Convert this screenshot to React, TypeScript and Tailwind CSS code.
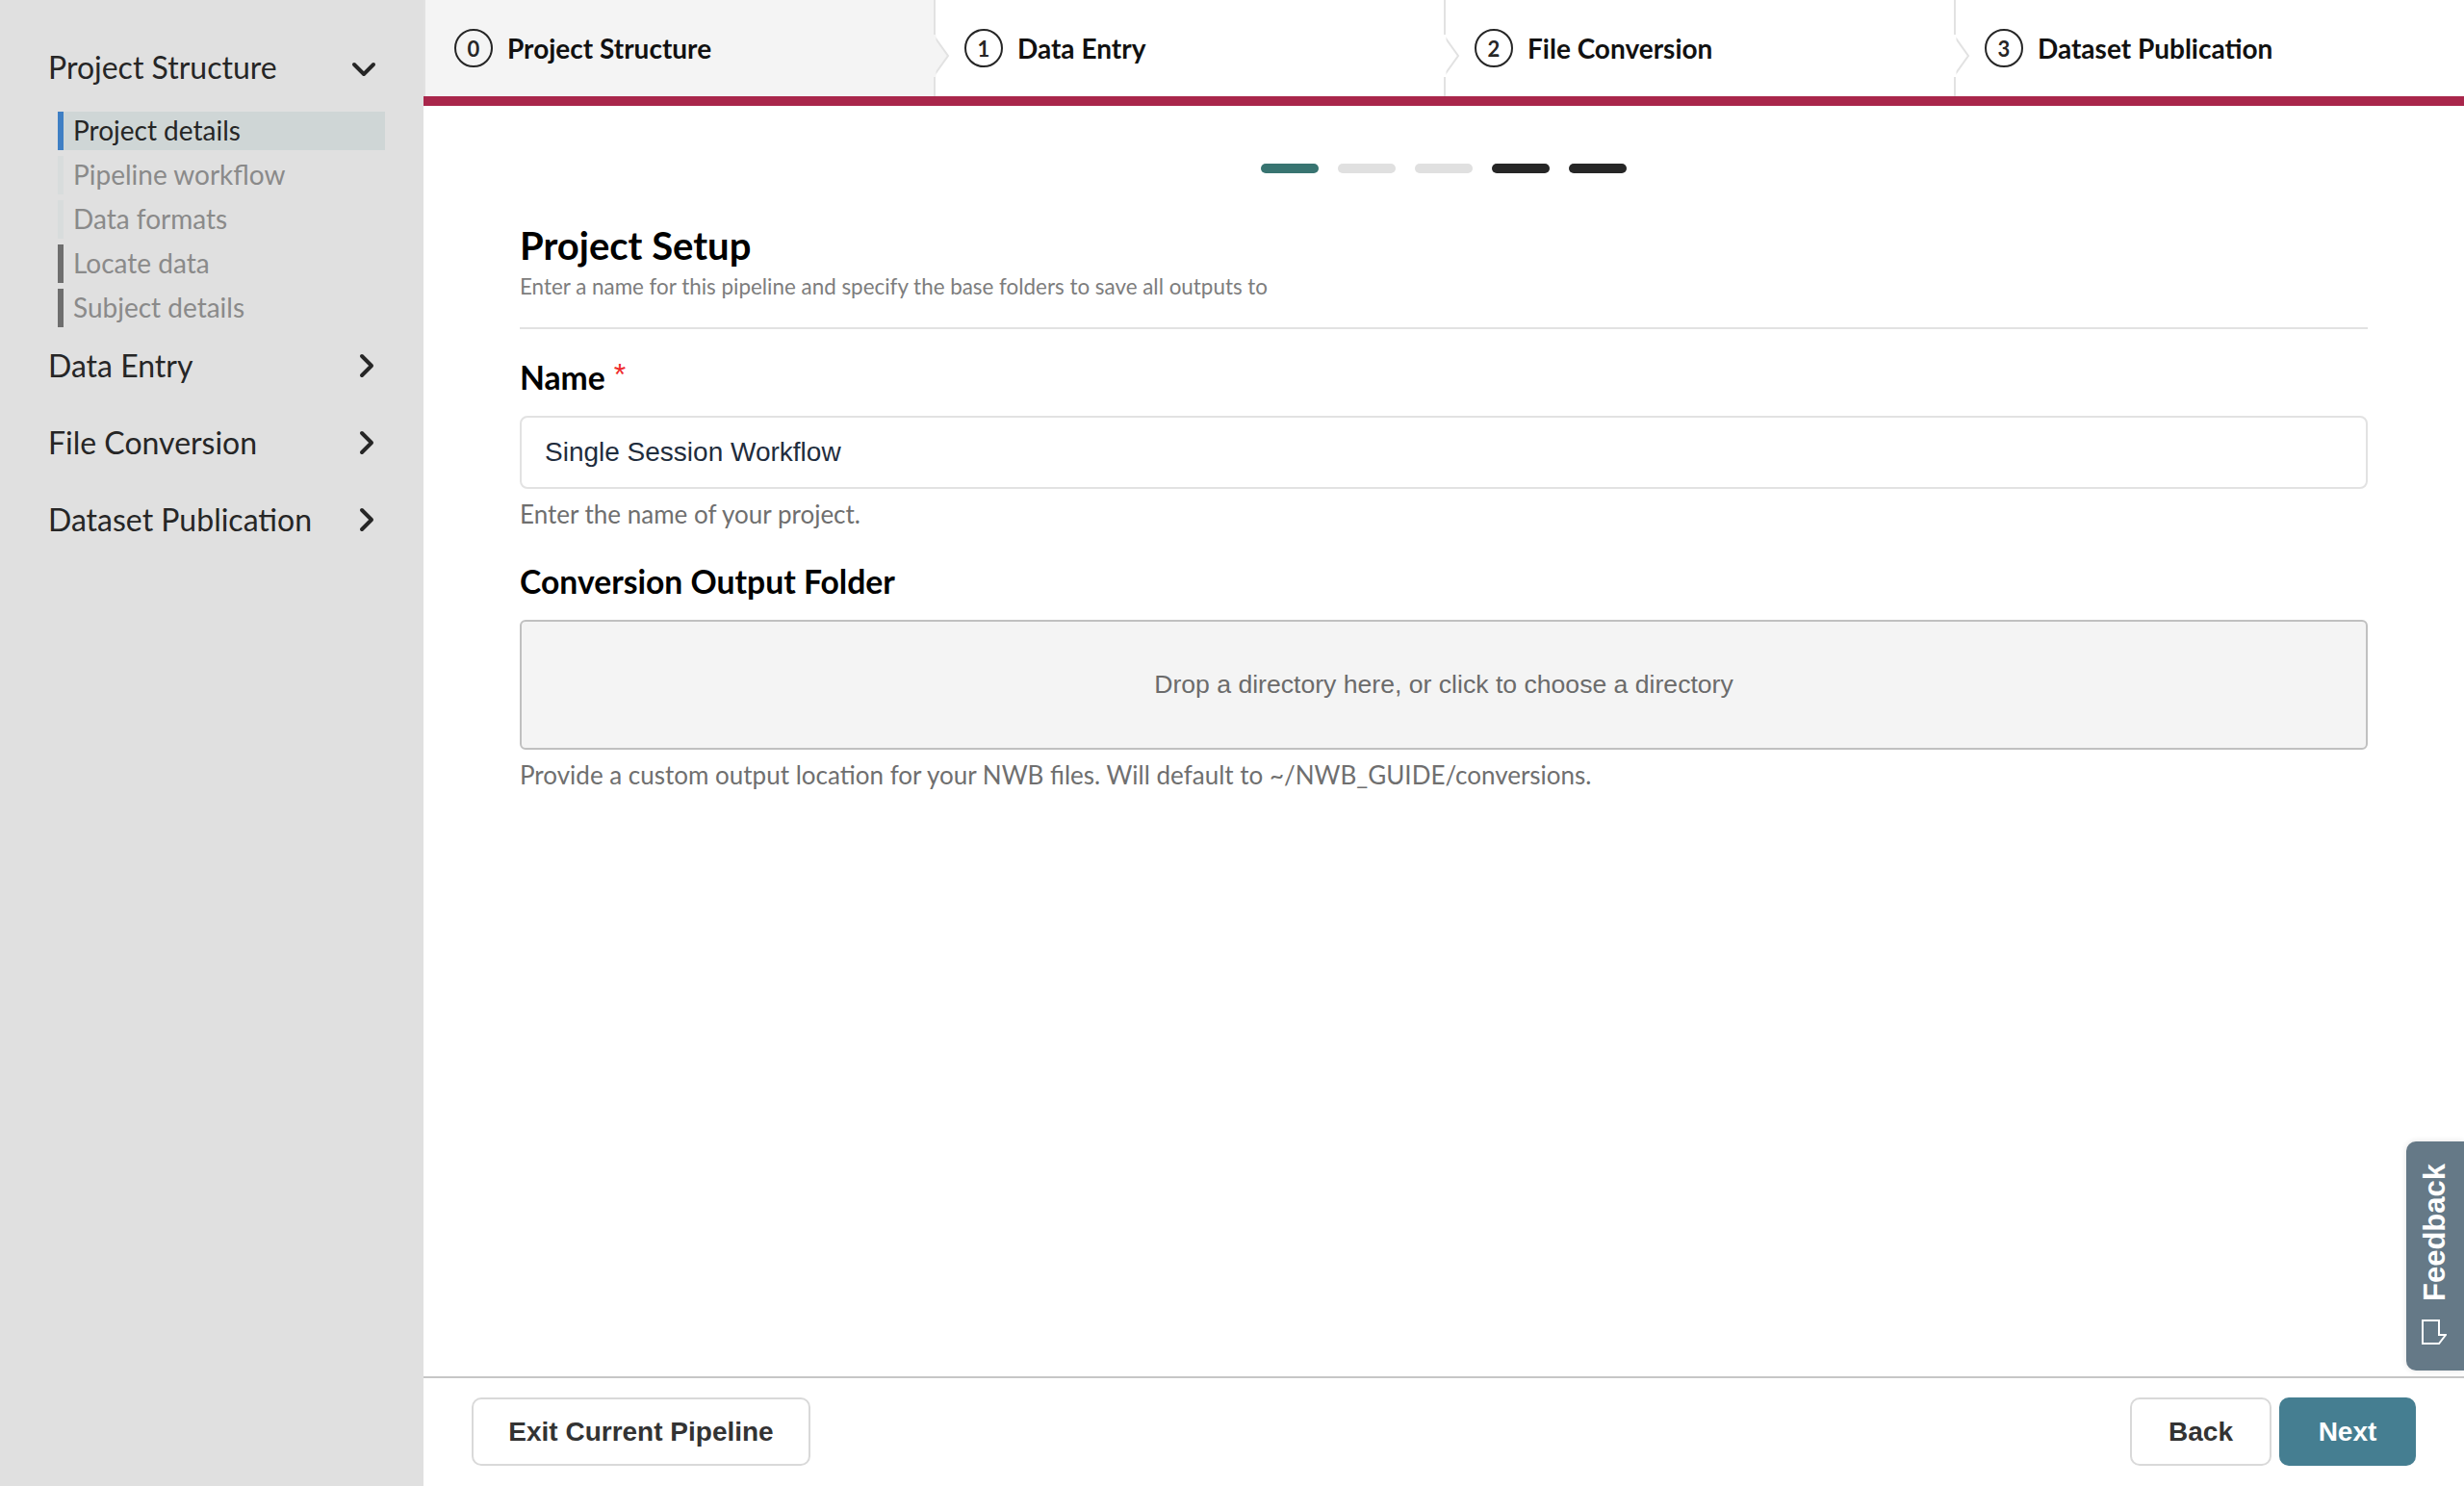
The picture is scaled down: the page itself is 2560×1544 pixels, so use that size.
const steps = [
  { n: 0, label: "Project Structure", active: true },
  { n: 1, label: "Data Entry" },
  { n: 2, label: "File Conversion" },
  { n: 3, label: "Dataset Publication" },
];

const subItems = [
  { label: "Project details", bar: "bg-[#3f7fc4]", text: "text-[#262626]", bg: "bg-[#cfd6d6]" },
  { label: "Pipeline workflow", bar: "bg-[#d8dcdc]", text: "text-[#8a8a8a]", bg: "" },
  { label: "Data formats", bar: "bg-[#d8dcdc]", text: "text-[#8a8a8a]", bg: "" },
  { label: "Locate data", bar: "bg-[#6e6e6e]", text: "text-[#8a8a8a]", bg: "" },
  { label: "Subject details", bar: "bg-[#6e6e6e]", text: "text-[#8a8a8a]", bg: "" },
];

function Chevron({ down }: { down?: boolean }) {
  return (
    <svg width="26" height="26" viewBox="0 0 26 26" fill="none" stroke="#262626" strokeWidth="4" strokeLinecap="round" strokeLinejoin="round">
      {down ? <path d="M3 8 L13 18 L23 8" /> : <path d="M8 3 L18 13 L8 23" />}
    </svg>
  );
}

function SideRow({ label, down }: { label: string; down?: boolean }) {
  return (
    <div className={`flex h-[80px] items-center justify-between pl-[50px] text-[32px] text-[#262626] ${down ? "pr-[49px]" : "pr-[46px]"}`}>
      <span className={down ? "pb-[4px]" : "pb-[1px]"}>{label}</span>
      <Chevron down={down} />
    </div>
  );
}

function Pill({ color }: { color: string }) {
  return <div className={`h-[10px] w-[60px] rounded-full ${color}`} />;
}

export default function App() {
  return (
    <div className="flex h-[1544px] w-[2560px] overflow-hidden bg-white font-['Lato','Noto_Sans',sans-serif]">
      <aside className="w-[440px] shrink-0 bg-[#e0e0e0] pt-[32px]">
        <SideRow label="Project Structure" down />
        <div className="ml-[60px] mt-[4px] flex w-[340px] flex-col gap-[6px]">
          {subItems.map((s) => (
            <div key={s.label} className={`flex h-[40px] items-center text-[28px] ${s.bg} ${s.text}`}>
              <div className={`h-full w-[6px] ${s.bar}`} />
              <span className="ml-[10px] pb-[2px]">{s.label}</span>
            </div>
          ))}
        </div>
        <SideRow label="Data Entry" />
        <SideRow label="File Conversion" />
        <SideRow label="Dataset Publication" />
      </aside>

      <main className="relative flex min-w-0 flex-1 flex-col">
        <header className="flex h-[110px] shrink-0 border-b-[10px] border-[#a9264b]">
          {steps.map((s, i) => (
            <div
              key={s.n}
              className={`relative flex h-[100px] flex-1 items-center border-l-2 border-[#e2e2e2] pl-[30px] ${i === 0 ? "bg-[#f4f4f4]" : "bg-white"}`}
            >
              {i > 0 && (
                <svg className="absolute left-[-2px] top-[36px]" width="18" height="44" viewBox="0 0 18 44" fill="none">
                  <path d="M0 1 L15 22 L0 43" fill={steps[i - 1].active ? "#f4f4f4" : "#ffffff"} stroke="#e2e2e2" strokeWidth="2" />
                  <path d="M1 0 V44" stroke={steps[i - 1].active ? "#f4f4f4" : "#ffffff"} strokeWidth="3" />
                </svg>
              )}
              <div className="flex h-[40px] w-[40px] items-center justify-center rounded-full border-2 border-[#262626] text-[22px] font-bold text-[#262626]">
                {s.n}
              </div>
              <span className="ml-[15px] text-[28px] font-bold text-[#111]">{s.label}</span>
            </div>
          ))}
        </header>

        <div className="mt-[60px] flex justify-center gap-[20px]">
          <Pill color="bg-[#387471]" />
          <Pill color="bg-[#e0e0e0]" />
          <Pill color="bg-[#e0e0e0]" />
          <Pill color="bg-[#262626]" />
          <Pill color="bg-[#262626]" />
        </div>

        <section className="flex-1 pl-[100px] pr-[100px]">
          <h1 className="mt-[52px] text-[40px] font-bold leading-[46px] text-black">Project Setup</h1>
          <p className="mt-[6px] text-[22.4px] leading-[28px] text-[#7d7d7d]">
            Enter a name for this pipeline and specify the base folders to save all outputs to
          </p>
          <hr className="mt-[28px] h-[2px] border-0 bg-[#e2e2e2]" />

          <div className="mt-[30px] flex h-[40px] items-center text-[33.7px] font-bold leading-[40px] text-black">
            Name
            <span className="ml-[9px] -mt-[6px] font-['Liberation_Sans',sans-serif] text-[32px] font-normal text-[#ef2b2d]">*</span>
          </div>
          <div className="mt-[20px] flex h-[76px] items-center rounded-[8px] border-2 border-[#e2e2e2] pl-[24px] font-['Liberation_Sans',sans-serif] text-[28px] text-[#1f2d3d]">
            Single Session Workflow
          </div>
          <p className="mt-[12px] text-[26px] leading-[28px] text-[#6f6f6f]">Enter the name of your project.</p>

          <div className="mt-[36px] text-[33.7px] font-bold leading-[40px] text-black">Conversion Output Folder</div>
          <div className="mt-[20px] flex h-[135px] items-center justify-center rounded-[6px] border-2 border-[#c0c0c0] bg-[#f4f4f4] font-['Liberation_Sans',sans-serif] text-[26.6px] text-[#6b6b6b]">
            Drop a directory here, or click to choose a directory
          </div>
          <p className="mt-[12px] text-[26px] leading-[28px] text-[#6f6f6f]">
            Provide a custom output location for your NWB files. Will default to ~/NWB_GUIDE/conversions.
          </p>
        </section>

        <footer className="flex h-[114px] shrink-0 items-start justify-between border-t-2 border-[#c6c6c6] pl-[50px] pr-[50px] pt-[20px] font-['Liberation_Sans',sans-serif] text-[28px] font-bold">
          <button className="h-[71px] w-[352px] rounded-[10px] border-2 border-[#d9d9d9] bg-white text-[#333]">
            Exit Current Pipeline
          </button>
          <div className="flex gap-[8px]">
            <button className="h-[71px] w-[147px] rounded-[10px] border-2 border-[#d9d9d9] bg-white text-[#333]">Back</button>
            <button className="h-[71px] w-[142px] rounded-[10px] bg-[#457e91] text-white">Next</button>
          </div>
        </footer>

        <div className="absolute right-0 top-[1186px] flex h-[238px] w-[60px] flex-col items-center justify-start rounded-l-[10px] bg-[#657987] pt-[23px] font-['Liberation_Sans',sans-serif] shadow-[0_0_6px_rgba(0,0,0,0.12)]">
          <span className="rotate-180 text-[31px] font-bold leading-[36px] text-white [writing-mode:vertical-rl]">Feedback</span>
          <svg className="mt-[19px] -ml-[2px]" width="26" height="26" viewBox="0 0 26 26" fill="none" stroke="#fff" strokeWidth="2">
            <path d="M1 1 H18 V16 H25 L18 25 H1 Z" />
          </svg>
        </div>
      </main>
    </div>
  );
}
